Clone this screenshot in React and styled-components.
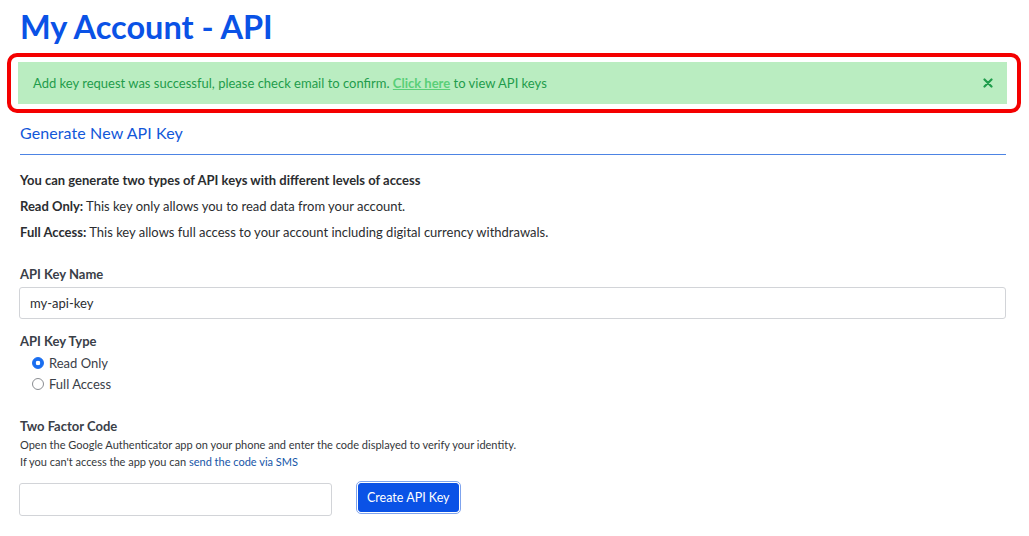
import React from 'react'
import styled, { createGlobalStyle } from 'styled-components'

const GlobalStyle = createGlobalStyle`
  body {
    margin: 0;
    background: #fff;
    font-family: Lato, "Liberation Sans", sans-serif;
    color: #2d2f33;
  }
`

const Page = styled.div`
  padding: 7px 23px 20px 20px;
`

const Title = styled.h1`
  margin: 0;
  font-size: 32.5px;
  line-height: 40px;
  font-weight: 700;
  color: #0a52e6;
`

const Highlight = styled.div`
  margin: 6px -15px 0 -13px;
  border: 4px solid #f40000;
  border-radius: 10px;
  padding: 5px 10px 5px 7px;
`

const Alert = styled.div`
  display: flex;
  align-items: center;
  justify-content: space-between;
  height: 42px;
  padding: 0 14px 0 15px;
  background: #baedc1;
  color: #1f9c4b;
  font-size: 13px;
`

const AlertLink = styled.a`
  color: #59cf78;
  font-weight: 700;
  text-decoration: underline;
`

const Close = styled.button`
  border: 0;
  background: none;
  padding: 0;
  display: flex;
  color: #1f9c4b;
`

const SectionTitle = styled.h2`
  margin: 8px 0 0;
  padding-bottom: 9px;
  border-bottom: 1px solid #4d84e4;
  font-size: 16px;
  line-height: 24px;
  font-weight: 400;
  color: #1257d9;
  letter-spacing: 0.1px;
`

const Intro = styled.div`
  margin-top: 15px;
  display: flex;
  flex-direction: column;
  gap: 6px;
  font-size: 13px;
  line-height: 20px;
  color: #2b2d30;
  p {
    margin: 0;
  }
  b {
    font-weight: 700;
  }
`

const Field = styled.div`
  margin-top: ${p => p.$top || 0}px;
`

const Label = styled.div`
  font-size: 13px;
  line-height: 20px;
  font-weight: 700;
  color: #3a4048;
`

const TextInput = styled.input`
  display: block;
  box-sizing: border-box;
  width: ${p => p.$width || 'calc(100% + 1px)'};
  height: ${p => p.$height || 32}px;
  margin: ${p => (p.$flush ? 0 : '3px')} 0 0 -1px;
  padding: 0 10px;
  border: 1px solid #d2d4d8;
  border-radius: 3px;
  font-family: inherit;
  font-size: 13px;
  color: #2b2d30;
`

const RadioList = styled.div`
  margin-top: 1px;
  padding-left: 12px;
`

const RadioRow = styled.label`
  display: flex;
  align-items: center;
  gap: 5px;
  height: 21px;
  font-size: 13px;
  color: #3a4048;
`

const RadioDot = styled.span`
  box-sizing: border-box;
  width: 12px;
  height: 12px;
  border-radius: 50%;
  border: 1px solid ${p => (p.$on ? '#1a6ef0' : '#8a8d92')};
  background: ${p => (p.$on ? 'radial-gradient(circle, #fff 0 2px, #1a6ef0 2.6px)' : '#fff')};
`

const Help = styled.p`
  margin: 0;
  font-size: 11px;
  line-height: 17px;
  color: #34373b;
  a {
    color: #1656a8;
    text-decoration: none;
  }
`

const SubmitRow = styled.div`
  display: flex;
  align-items: flex-start;
  gap: 26px;
  margin-top: 13px;
`

const Button = styled.button`
  height: 29px;
  padding: 0 8px;
  border: 1px solid #0a52e6;
  border-radius: 3px;
  outline: 1px solid #7fa4ee;
  outline-offset: 1px;
  background: #0a52e6;
  color: #fff;
  font-family: inherit;
  font-size: 12.5px;
`

export default function App() {
  return (
    <Page>
      <GlobalStyle />
      <Title>My Account - API</Title>
      <Highlight>
        <Alert>
          <span>
            Add key request was successful, please check email to confirm.{' '}
            <AlertLink href="#">Click here</AlertLink> to view API keys
          </span>
          <Close aria-label="close">
            <svg width="10" height="10" viewBox="0 0 10 10">
              <path d="M1.5 1.5 L8.5 8.5 M8.5 1.5 L1.5 8.5" stroke="currentColor" strokeWidth="2.2" strokeLinecap="round" />
            </svg>
          </Close>
        </Alert>
      </Highlight>
      <SectionTitle>Generate New API Key</SectionTitle>
      <Intro>
        <p><b>You can generate two types of API keys with different levels of access</b></p>
        <p><b>Read Only:</b> This key only allows you to read data from your account.</p>
        <p><b>Full Access:</b> This key allows full access to your account including digital currency withdrawals.</p>
      </Intro>
      <Field $top={22}>
        <Label>API Key Name</Label>
        <TextInput defaultValue="my-api-key" />
      </Field>
      <Field $top={12}>
        <Label>API Key Type</Label>
        <RadioList>
          <RadioRow><RadioDot $on />Read Only</RadioRow>
          <RadioRow><RadioDot />Full Access</RadioRow>
        </RadioList>
      </Field>
      <Field $top={22}>
        <Label>Two Factor Code</Label>
        <Help>Open the Google Authenticator app on your phone and enter the code displayed to verify your identity.</Help>
        <Help>If you can't access the app you can <a href="#">send the code via SMS</a></Help>
        <SubmitRow>
          <TextInput $flush $width="313px" $height={33} />
          <Button>Create API Key</Button>
        </SubmitRow>
      </Field>
    </Page>
  )
}
